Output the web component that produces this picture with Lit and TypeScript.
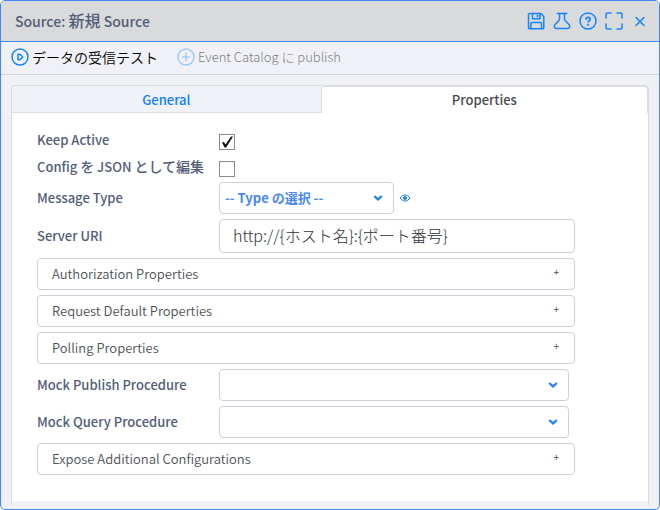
import { LitElement, html, css, svg } from "lit";
import { customElement, state } from "lit/decorators.js";

const icons = {
  save: svg`<path d="M1.5 2.5a1 1 0 0 1 1-1h11.300l3 3v11.200a1 1 0 0 1-1 1H2.500a1 1 0 0 1-1-1z"/><path d="M5.500 1.500v5.200h7.500v-5.200"/><path d="M10.500 3.200v1.600"/><path d="M3.800 16.500v-5q0-1 1-1h8.700q1 0 1 1v5"/>`,
  flask: svg`<path d="M4.200 1.500h9.600"/><path d="M6.500 1.500v5.500q0 1-.8 1.700L2 12.500c-1.500 2-.5 4 1.300 4h11.400c1.800 0 2.800-2 1.300-4l-3.700-3.800q-.8-.7-.8-1.700V1.500"/>`,
  help: svg`<circle cx="9" cy="9" r="8"/><path d="M7 7.300c0-2.600 4.200-2.600 4.200 0 0 1.500-2.100 1.400-2.100 2.800" stroke-width="1.600"/><path d="M9 12.600v.4" stroke-width="1.800"/>`,
  expand: svg`<path d="M1 6V2.500A1.500 1.500 0 0 1 2.500 1H6M12 1h3.500A1.500 1.500 0 0 1 17 2.500V6M17 12v3.500a1.500 1.500 0 0 1-1.500 1.500H12M6 17H2.500A1.500 1.500 0 0 1 1 15.500V12"/>`,
  close: svg`<path d="M5 5.500l8 8M13 5.500l-8 8"/>`,
  play: svg`<circle cx="9" cy="9" r="8"/><path d="M7 6.200v5.600h1.500l3-2.300v-1L8.500 6.200z"/>`,
  plus: svg`<circle cx="9" cy="9" r="8"/><path d="M9 5.500v7M5.500 9h7"/>`,
};

const icon = (name: keyof typeof icons) =>
  html`<svg class="icon" viewBox="0 0 18 18" aria-hidden="true">${icons[name]}</svg>`;

const chevron = html`<svg class="chevron" viewBox="0 0 10 6" aria-hidden="true">
  <path d="M1.200 1L5 4.400 8.800 1" />
</svg>`;

@customElement("app-root")
export class AppRoot extends LitElement {
  static styles = css`
    :host {
      display: block;
      min-height: 100vh;
      font: 13px/20px "Noto Sans CJK JP", "Noto Sans", sans-serif;
      color: #4f5258;
    }
    * { box-sizing: border-box; }
    button, input, select { font: inherit; color: inherit; margin: 0; }
    button { background: none; border: 0; padding: 0; }
    .window {
      display: flex;
      flex-direction: column;
      min-height: 100vh;
      border: 1px solid #4285f4;
      border-radius: 5px;
      background: #f0f1f6;
      overflow: hidden;
    }
    .titlebar {
      display: flex;
      align-items: center;
      justify-content: space-between;
      height: 41px;
      padding: 0 10px 0 14px;
      background: #d9dadc;
      border-bottom: 1px solid #4285f4;
    }
    h1 {
      margin: 0;
      padding-bottom: 2px;
      font-size: 14px;
      line-height: 22px;
      font-weight: 500;
      color: #545d78;
    }
    h1 .ja { font-size: 16px; }
    label .ja { font-size: 14px; }
    .actions { display: flex; gap: 8px; color: #1485ff; }
    .actions button, .toolbar button { display: flex; align-items: center; }
    .icon {
      width: 18px;
      height: 18px;
      flex: none;
      fill: none;
      stroke: currentColor;
      stroke-width: 1.5;
      stroke-linecap: round;
      stroke-linejoin: round;
    }
    .toolbar {
      display: flex;
      gap: 19px;
      height: 33px;
      padding: 0 10px 2px;
      border-bottom: 1px solid #cfd6dc;
    }
    .toolbar button { gap: 3px; font-size: 14px; font-weight: 350; color: #000; }
    .toolbar .icon { color: #1485ff; }
    .toolbar button:disabled { font-size: 13px; font-weight: 300; color: #808184; }
    .toolbar button:disabled .icon { color: #9acbfb; }
    .content { padding: 10px 10px 4px; flex: 1; display: flex; }
    .card {
      flex: 1;
      display: flex;
      flex-direction: column;
      border: 1px solid #dcdddf;
      border-width: 1px 1px 0;
      border-radius: 4px 4px 0 0;
      padding-bottom: 4px;
    }
    .tabs { display: flex; height: 27px; }
    .tab {
      flex: 1;
      padding-top: 2px;
      font-weight: 500;
      color: #0a82ff;
      border-bottom: 1px solid #dcdddf;
    }
    .tab[aria-selected="true"] {
      flex: 0 0 calc(51% + 3px);
      padding-top: 0;
      color: #4a4a4f;
      background: #fff;
      border: 1px solid #dcdddf;
      border-width: 1px 1px 0;
      border-radius: 4px 4px 0 0;
    }
    .form {
      flex: 1;
      display: flex;
      flex-direction: column;
      gap: 5px;
      padding: 15px 25px 26px;
      background: #fff;
    }
    .row {
      display: grid;
      grid-template-columns: 182px minmax(0, 356px);
      align-items: center;
    }
    .row.tick { height: 22px; align-items: end; }
    .row > label { font-weight: 500; color: #545d78; }
    .tick input {
      appearance: none;
      width: 16px;
      height: 16px;
      border: 1px solid #8c8c8c;
      background: #fff;
    }
    .tick input:checked::before {
      content: "";
      display: block;
      width: 14px;
      height: 14px;
      background: #111;
      clip-path: path("M2 7.500L4 7L5.600 9.500L11 1.500L13 1.500L6.200 12.500L4.600 12.500Z");
    }
    .text, .panel, .select select {
      width: 100%;
      border: 1px solid #cfd0da;
      border-radius: 4px;
      background: #fff;
    }
    .text { height: 34px; padding: 0 13px 2px; font-size: 16px; font-weight: 300; color: #303236; }
    .pick { display: flex; align-items: center; gap: 5px; }
    .select { display: grid; width: 350px; align-items: center; }
    .select.short { width: 175px; }
    .select select {
      appearance: none;
      grid-area: 1 / 1;
      height: 32px;
      padding: 0 24px 0 5px;
      font-weight: 700;
      color: #4a88f3;
    }
    .chevron {
      grid-area: 1 / 1;
      justify-self: end;
      width: 10px;
      height: 6px;
      margin-right: 11px;
      pointer-events: none;
      fill: none;
      stroke: #1f80f5;
      stroke-width: 2.2;
    }
    .eye { display: flex; }
    .eye svg { width: 12px; height: 8px; fill: none; stroke: #1f80f5; }
    .panel {
      display: flex;
      justify-content: space-between;
      align-items: center;
      max-width: 538px;
      height: 32px;
      padding: 0 15px 0 14px;
      font-weight: 350;
    }
    .plus { font-size: 10px; line-height: 12px; padding-bottom: 4px; font-weight: 400; }
  `;

  @state() private tab = "Properties";

  private panel(name: string) {
    return html`<button class="panel" type="button" aria-expanded="false">
      <span>${name}</span><span class="plus">+</span>
    </button>`;
  }

  private procedure(id: string, name: string) {
    return html`<div class="row">
      <label for=${id}>${name}</label>
      <div class="select"><select id=${id}><option></option></select>${chevron}</div>
    </div>`;
  }

  render() {
    return html`
      <main class="window">
        <header class="titlebar">
          <h1>Source: <span class="ja">新規</span> Source</h1>
          <div class="actions">
            <button aria-label="Save">${icon("save")}</button>
            <button aria-label="Test">${icon("flask")}</button>
            <button aria-label="Help">${icon("help")}</button>
            <button aria-label="Maximize">${icon("expand")}</button>
            <button aria-label="Close">${icon("close")}</button>
          </div>
        </header>
        <div class="toolbar">
          <button>${icon("play")}データの受信テスト</button>
          <button disabled>${icon("plus")}Event Catalog に publish</button>
        </div>
        <div class="content">
          <section class="card">
            <div class="tabs" role="tablist">
              ${["General", "Properties"].map(
                (name) => html`<button
                  class="tab"
                  role="tab"
                  aria-selected=${this.tab === name}
                  @click=${() => (this.tab = name)}
                >${name}</button>`
              )}
            </div>
            <form class="form" @submit=${(e: Event) => e.preventDefault()}>
              <div class="row tick">
                <label for="active">Keep Active</label>
                <input id="active" type="checkbox" checked />
              </div>
              <div class="row tick">
                <label for="json">Config <span class="ja">を</span> JSON <span class="ja">として編集</span></label>
                <input id="json" type="checkbox" />
              </div>
              <div class="row">
                <label for="type">Message Type</label>
                <div class="pick">
                  <div class="select short">
                    <select id="type"><option>-- Type の選択 --</option></select>${chevron}
                  </div>
                  <button class="eye" type="button" aria-label="View type">
                    <svg viewBox="0 0 12 8" aria-hidden="true">
                      <path d="M1 4Q6-2.400 11 4 6 10.400 1 4z" /><circle cx="6" cy="4" r="1.500" fill="#1f80f5" />
                    </svg>
                  </button>
                </div>
              </div>
              <div class="row">
                <label for="uri">Server URI</label>
                <input id="uri" class="text" type="text" value="http://{ホスト名}:{ポート番号}" />
              </div>
              ${["Authorization Properties", "Request Default Properties", "Polling Properties"].map((n) => this.panel(n))}
              ${this.procedure("publish", "Mock Publish Procedure")}
              ${this.procedure("query", "Mock Query Procedure")}
              ${this.panel("Expose Additional Configurations")}
            </form>
          </section>
        </div>
      </main>
    `;
  }
}
